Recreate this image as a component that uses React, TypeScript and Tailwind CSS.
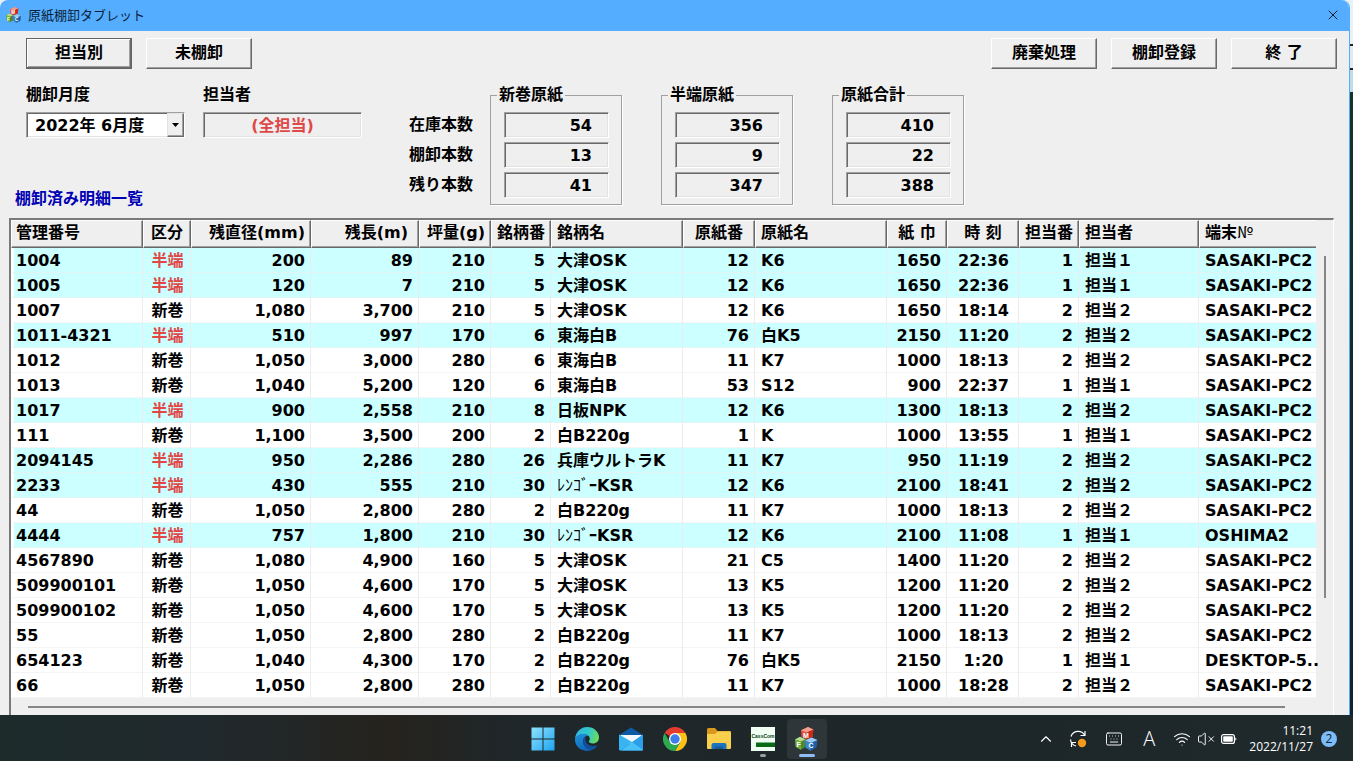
import { ChevronUp, Keyboard, Wifi, VolumeX, X } from "lucide-react"
import clsx from "clsx"

type Align = "left" | "center" | "right"

type Column = {
  title: string
  width: string
  head: Align
  body: Align
  headPad?: string
}

const columns: Column[] = [
  { title: "管理番号", width: "w-[132px]", head: "left", body: "left" },
  { title: "区分", width: "w-[48px]", head: "center", body: "center" },
  { title: "残直径(mm)", width: "w-[120px]", head: "right", body: "right" },
  { title: "残長(m)", width: "w-[108px]", head: "right", body: "right", headPad: "pr-2.5" },
  { title: "坪量(g)", width: "w-[72px]", head: "right", body: "right" },
  { title: "銘柄番", width: "w-[60px]", head: "center", body: "right" },
  { title: "銘柄名", width: "w-[132px]", head: "left", body: "left" },
  { title: "原紙番", width: "w-[72px]", head: "center", body: "right" },
  { title: "原紙名", width: "w-[132px]", head: "left", body: "left" },
  { title: "紙 巾", width: "w-[60px]", head: "center", body: "right" },
  { title: "時 刻", width: "w-[72px]", head: "center", body: "center" },
  { title: "担当番", width: "w-[60px]", head: "center", body: "right" },
  { title: "担当者", width: "w-[120px]", head: "left", body: "left" },
  { title: "端末№", width: "", head: "left", body: "left" },
]

const rows: string[][] = [
  ["1004", "半端", "200", "89", "210", "5", "大津OSK", "12", "K6", "1650", "22:36", "1", "担当１", "SASAKI-PC2"],
  ["1005", "半端", "120", "7", "210", "5", "大津OSK", "12", "K6", "1650", "22:36", "1", "担当１", "SASAKI-PC2"],
  ["1007", "新巻", "1,080", "3,700", "210", "5", "大津OSK", "12", "K6", "1650", "18:14", "2", "担当２", "SASAKI-PC2"],
  ["1011-4321", "半端", "510", "997", "170", "6", "東海白B", "76", "白K5", "2150", "11:20", "2", "担当２", "SASAKI-PC2"],
  ["1012", "新巻", "1,050", "3,000", "280", "6", "東海白B", "11", "K7", "1000", "18:13", "2", "担当２", "SASAKI-PC2"],
  ["1013", "新巻", "1,040", "5,200", "120", "6", "東海白B", "53", "S12", "900", "22:37", "1", "担当１", "SASAKI-PC2"],
  ["1017", "半端", "900", "2,558", "210", "8", "日板NPK", "12", "K6", "1300", "18:13", "2", "担当２", "SASAKI-PC2"],
  ["111", "新巻", "1,100", "3,500", "200", "2", "白B220g", "1", "K", "1000", "13:55", "1", "担当１", "SASAKI-PC2"],
  ["2094145", "半端", "950", "2,286", "280", "26", "兵庫ウルトラK", "11", "K7", "950", "11:19", "2", "担当２", "SASAKI-PC2"],
  ["2233", "半端", "430", "555", "210", "30", "ﾚﾝｺﾞｰKSR", "12", "K6", "2100", "18:41", "2", "担当２", "SASAKI-PC2"],
  ["44", "新巻", "1,050", "2,800", "280", "2", "白B220g", "11", "K7", "1000", "18:13", "2", "担当２", "SASAKI-PC2"],
  ["4444", "半端", "757", "1,800", "210", "30", "ﾚﾝｺﾞｰKSR", "12", "K6", "2100", "11:08", "1", "担当１", "OSHIMA2"],
  ["4567890", "新巻", "1,080", "4,900", "160", "5", "大津OSK", "21", "C5", "1400", "11:20", "2", "担当２", "SASAKI-PC2"],
  ["509900101", "新巻", "1,050", "4,600", "170", "5", "大津OSK", "13", "K5", "1200", "11:20", "2", "担当２", "SASAKI-PC2"],
  ["509900102", "新巻", "1,050", "4,600", "170", "5", "大津OSK", "13", "K5", "1200", "11:20", "2", "担当２", "SASAKI-PC2"],
  ["55", "新巻", "1,050", "2,800", "280", "2", "白B220g", "11", "K7", "1000", "18:13", "2", "担当２", "SASAKI-PC2"],
  ["654123", "新巻", "1,040", "4,300", "170", "2", "白B220g", "76", "白K5", "2150", "1:20", "1", "担当１", "DESKTOP-5.."],
  ["66", "新巻", "1,050", "2,800", "280", "2", "白B220g", "11", "K7", "1000", "18:28", "2", "担当２", "SASAKI-PC2"],
]

const totals = [
  { title: "新巻原紙", values: ["54", "13", "41"] },
  { title: "半端原紙", values: ["356", "9", "347"] },
  { title: "原紙合計", values: ["410", "22", "388"] },
]

const totalLabels = ["在庫本数", "棚卸本数", "残り本数"]

const alignClass: Record<Align, string> = {
  left: "text-left",
  center: "text-center",
  right: "text-right",
}

const sunken =
  "border border-t-[#a0a0a0] border-l-[#a0a0a0] border-r-white border-b-white shadow-[inset_1px_1px_0_#696969,inset_-1px_-1px_0_#e3e3e3]"

// The three lettered blocks used by the title bar and the task bar
function BlocksIcon({ className }: { className: string }) {
  return (
    <svg viewBox="0 0 24 24" className={className} aria-hidden="true">
      <path d="M6 3.2 13 0l5.4 2.4-.8 7.4-6 2.8-5.2-3z" fill="#e2513f" />
      <path d="M6 3.2 13 0l5.4 2.4-6.6 3z" fill="#f2a08c" />
      <path d="M18.400 2.400 11.800 5.400l-.2 7.200 6-2.800z" fill="#c9281c" />
      <path d="m0 12.4 5-2.6 5.6 2.4.2 7.6-4.8 3L.8 20z" fill="#4e8a2c" />
      <path d="m0 12.4 5-2.6 5.6 2.4-4.8 2.4z" fill="#b4dc90" />
      <path d="m0 12.4 5.8 2.2.2 8.2L.8 20z" fill="#6fae42" />
      <path d="m10 13.4 6.4-2.8 6 2.4-.8 7.6-6 3.2-5-3z" fill="#1d5ea6" />
      <path d="m10 13.4 6.4-2.8 6 2.4-6.6 3z" fill="#9fcbf0" />
      <path d="m10 13.4 5.8 2.6-.2 7.8-5-3z" fill="#3c86cc" />
      <g fill="#fff" fontFamily="Liberation Sans" fontWeight="bold" fontSize="7">
        <text x="8" y="11">M</text>
        <text x="1.4" y="20.4">F</text>
        <text x="13.4" y="21.4">C</text>
      </g>
    </svg>
  )
}

function WindowsIcon() {
  return (
    <svg viewBox="0 0 24 24" className="size-6" aria-hidden="true">
      <defs>
        <linearGradient id="win" x1="0" y1="0" x2="1" y2="1">
          <stop offset="0" stopColor="#8fe3ff" />
          <stop offset="1" stopColor="#1ea4ef" />
        </linearGradient>
      </defs>
      <path d="M.5.5h11v11H.5zM12.500.5h11v11h-11zM.5 12.500h11v11H.5zM12.500 12.500h11v11h-11z" fill="url(#win)" />
    </svg>
  )
}

function EdgeIcon() {
  return (
    <svg viewBox="0 0 24 24" className="size-6" aria-hidden="true">
      <defs>
        <linearGradient id="edgeTop" x1="0" y1="0.3" x2="1" y2="0.5">
          <stop offset="0" stopColor="#2fb4ea" />
          <stop offset="0.6" stopColor="#35c9c0" />
          <stop offset="1" stopColor="#6fdc5a" />
        </linearGradient>
        <linearGradient id="edgeLow" x1="0" y1="0" x2="0.6" y2="1">
          <stop offset="0" stopColor="#1d93dc" />
          <stop offset="1" stopColor="#1160b4" />
        </linearGradient>
      </defs>
      <path d="M0 12C.6 4.800 6 0 12.200 0 19 0 24 4.900 24 10.400c0 3.700-2.900 6-6.200 6-2.600 0-4-.9-4-1.800 0-.6 1-1.100 1-2.800 0-2.300-2.300-4.500-6-4.500C4.600 7.300 1.300 9 0 12z" fill="url(#edgeTop)" />
      <path d="M0 12c1-3 4.400-4.900 8.600-4.900 2 0 3.600.5 4.700 1.400-3 .3-5.300 2.700-5.300 5.700 0 3.600 3.200 6.500 7.800 6.500 2.600 0 4.800-.7 6.400-1.600C20 22.100 16.400 24 12.300 24 5.400 24-.4 19 0 12z" fill="url(#edgeLow)" />
      <path d="M8 14.200c0-2.200 1.400-4.300 3.300-5.200-.7 1-.9 2-.9 3 0 4 3.300 6.900 7.600 6.900 1.700 0 3.200-.4 4.500-1-.8 1.800-3.600 4.600-7.600 4.600-4 0-6.900-4-6.900-8.300z" fill="#0f4f9c" />
    </svg>
  )
}

function MailIcon() {
  return (
    <svg viewBox="0 0 24 24" className="size-6" aria-hidden="true">
      <path d="M0 8 12 .5 24 8v5H0z" fill="#0f5aa5" />
      <path d="M1.500 8h21v6L12 18 1.500 13z" fill="#f4f8fc" />
      <path d="M0 7.500 13 15 2 23.500h-.8A1.200 1.200 0 0 1 0 22.300z" fill="#37b4f2" />
      <path d="M24 7.500v14.800a1.200 1.200 0 0 1-1.200 1.200H2L13 15z" fill="#2b9fe8" />
      <path d="M13 15 24 23a1 1 0 0 1-1 .5H2z" fill="#48c0f8" />
    </svg>
  )
}

function ChromeIcon() {
  return (
    <svg viewBox="0 0 24 24" className="size-6" aria-hidden="true">
      <path d="M12 12 1.600 6A12 12 0 0 1 22.400 6z" fill="#e33b2e" />
      <path d="M12 12V6h10.400A12 12 0 0 1 12 24l5.200-9z" fill="#fbc116" />
      <path d="m12 12 5.200 3L12 24A12 12 0 0 1 1.600 6l5.200 9z" fill="#2da94f" />
      <circle cx="12" cy="12" r="6" fill="#fff" />
      <circle cx="12" cy="12" r="4.700" fill="#3f7ee8" />
    </svg>
  )
}

function FolderIcon() {
  return (
    <svg viewBox="0 0 24 24" className="size-6" aria-hidden="true">
      <path d="M0 2.500A1.500 1.500 0 0 1 1.500 1H8l2.500 3H23a1 1 0 0 1 1 1v5H0z" fill="#d9981b" />
      <path d="M0 7h8l2.500-2.500H23a1 1 0 0 1 1 1v15.500a1 1 0 0 1-1 1H1a1 1 0 0 1-1-1z" fill="#fbcf4e" />
      <path d="M4.500 22v-4a2 2 0 0 1 2-2h11a2 2 0 0 1 2 2v4z" fill="#1c74bf" />
      <path d="M8 19.500h8V22H8z" fill="#155a99" />
    </svg>
  )
}

function CassComIcon() {
  return (
    <svg viewBox="0 0 24 24" className="size-6" aria-hidden="true">
      <path d="M0 0h24v24H0z" fill="#effff2" />
      <text x="12" y="11" textAnchor="middle" fontFamily="Liberation Sans" fontWeight="bold" fontSize="5" fill="#0a3d12">
        CassCom
      </text>
      <path d="M5 15.500h19V20H5z" fill="#0b6a16" />
    </svg>
  )
}

function SyncIcon() {
  return (
    <svg viewBox="0 0 18 18" className="size-[18px]" fill="none" stroke="#fff" strokeWidth="1.200" aria-hidden="true">
      <path d="M2 6.500A7.500 7.500 0 0 1 15.500 5M16 1v4.500h-4.500" />
      <path d="M1.500 9.500A7.500 7.500 0 0 0 7 16M7 12.500H2.500V17" />
      <circle cx="13" cy="13" r="4.200" fill="#f59a1b" stroke="none" />
    </svg>
  )
}

function BatteryIcon() {
  return (
    <svg viewBox="0 0 16 12" className="h-3 w-4" aria-hidden="true">
      <rect x=".6" y="1.600" width="12.800" height="8.800" rx="2" fill="none" stroke="#fff" strokeWidth="1.200" />
      <rect x="2.200" y="3.200" width="9.600" height="5.600" rx=".8" fill="#fff" />
      <path d="M14.300 4.500c1.400 0 1.400 3 0 3z" fill="#fff" />
    </svg>
  )
}

function PushButton({ label, active = false }: { label: string; active?: boolean }) {
  return (
    <button
      type="button"
      className={clsx(
        "h-[31px] w-[106px] border bg-[#efefef] pb-0.5 text-base leading-6 font-bold",
        active
          ? "border-[#646464] shadow-[inset_-1px_-1px_0_#696969,inset_1px_1px_0_#fff,inset_-2px_-2px_0_#a0a0a0]"
          : "border-t-white border-r-[#696969] border-b-[#696969] border-l-white shadow-[inset_-1px_-1px_0_#a0a0a0]",
      )}
    >
      {label}
    </button>
  )
}

function TotalsBox({ title, values }: { title: string; values: string[] }) {
  return (
    <fieldset className="flex w-[132px] flex-col border border-[#a0a0a0] pr-3 pb-1.5 pl-[13px] shadow-[1px_1px_0_#fff]">
      <legend className="-ml-[7px] bg-[#efefef] px-0.5 leading-6">{title}</legend>
      <div className="flex flex-col gap-1 pt-[5px]">
        {values.map((value, i) => (
          <input
            key={totalLabels[i]}
            readOnly
            value={value}
            aria-label={`${title} ${totalLabels[i]}`}
            className={clsx("h-[26px] w-full pr-4 text-right", sunken)}
          />
        ))}
      </div>
    </fieldset>
  )
}

// Half-width kana come out in the light face, like the numero sign
function CellText({ text }: { text: string }) {
  const parts = text.split(/([\uff71-\uff9f]+|№)/)
  return (
    <>
      {parts.map((part, i) =>
        i % 2 ? (
          <span
            key={i}
            className={clsx("font-normal", part === "№" && "font-['Noto_Sans_CJK_JP',sans-serif] leading-4")}
          >
            {part}
          </span>
        ) : (
          part
        ),
      )}
    </>
  )
}

function StockTable() {
  return (
    <table className="w-full table-fixed border-separate border-spacing-0 bg-white text-base leading-6">
      <colgroup>
        {columns.map((c) => (
          <col key={c.title} className={c.width} />
        ))}
      </colgroup>
      <thead>
        <tr className="h-7">
          {columns.map((c, i) => (
            <th
              key={c.title}
              className={clsx(
                "overflow-hidden border-t border-b border-l border-t-white border-b-[#696969] border-l-white bg-[#efefef] p-0 pb-0.5 leading-6 font-bold whitespace-nowrap",
                i < columns.length - 1
                  ? "border-r border-r-[#696969] shadow-[inset_-1px_-1px_0_#a0a0a0]"
                  : "shadow-[inset_0_-1px_0_#a0a0a0]",
                alignClass[c.head],
                c.head === "left" && (i === 0 ? "pl-1" : "pl-[5px]"),
                c.head === "right" && (c.headPad ?? "pr-[5px]"),
              )}
            >
              <CellText text={c.title} />
            </th>
          ))}
        </tr>
      </thead>
      <tbody>
        {rows.map((row) => {
          const partial = row[1] === "半端"
          return (
            <tr key={row[0]} className={clsx("h-[25px]", partial && "bg-[#ccffff]")}>
              {row.map((text, i) => (
                <td
                  key={i}
                  className={clsx(
                    "border-b border-b-[#ececec]/60 p-0 pt-0.5 leading-[22px] whitespace-nowrap",
                    i < row.length - 1 && "border-r border-r-[#ececec]",
                    i === 0 && "border-l-[3px] border-l-white",
                    alignClass[columns[i].body],
                    columns[i].body === "left" && (i === 0 ? "pl-0.5" : "pl-1.5"),
                    columns[i].body === "right" && "pr-[5px]",
                    columns[i].body === "center" && "pl-0.5",
                    i === 1 && partial && "text-[#e04848]",
                  )}
                >
                  <CellText text={text} />
                </td>
              ))}
            </tr>
          )
        })}
      </tbody>
    </table>
  )
}

function Taskbar() {
  const apps = [
    { name: "スタート", icon: <WindowsIcon /> },
    { name: "Edge", icon: <EdgeIcon /> },
    { name: "メール", icon: <MailIcon /> },
    { name: "Chrome", icon: <ChromeIcon /> },
    { name: "エクスプローラー", icon: <FolderIcon /> },
    { name: "CassCom", icon: <CassComIcon />, mark: "w-1.5 bg-[#9a9fa2]" },
    { name: "原紙棚卸", icon: <BlocksIcon className="size-6" />, mark: "w-4 bg-[#8fbdf5]", active: true },
  ]

  return (
    <footer className="grid h-[46px] grid-cols-[1fr_auto_1fr] items-center bg-[linear-gradient(90deg,#1d2b2b_0%,#20292d_15%,#26231e_29%,#1f272a_38%,#1d2629_70%,#1f2a2d_100%)] pt-px font-normal text-white">
      <div />
      <nav className="flex gap-1 pr-1">
        {apps.map((app) => (
          <button
            key={app.name}
            type="button"
            aria-label={app.name}
            className={clsx(
              "relative flex size-10 items-center justify-center rounded",
              app.active && "bg-[#2e3639]",
            )}
          >
            {app.icon}
            {app.mark && <span className={clsx("absolute bottom-0.5 h-[3px] rounded-full", app.mark)} />}
          </button>
        ))}
      </nav>
      <div className="flex items-center justify-end pr-4">
        <ChevronUp size={18} strokeWidth={1.5} className="mr-3.5" />
        <span className="mr-[18px]">
          <SyncIcon />
        </span>
        <Keyboard size={18} strokeWidth={1.25} className="mr-5" />
        <span className="mr-[18px] font-['Open_Sans',sans-serif] text-xl leading-6 font-light">A</span>
        <Wifi size={18} strokeWidth={1.5} className="mr-1.5" />
        <VolumeX size={18} strokeWidth={1.25} className="mr-1.5" />
        <BatteryIcon />
        <div className="ml-3 text-right font-['Open_Sans',sans-serif] text-xs leading-4">
          <p>11:21</p>
          <p>2022/11/27</p>
        </div>
        <span className="ml-2 flex size-4 items-center justify-center rounded-full bg-[#7cbcf8] font-['Open_Sans',sans-serif] text-xs leading-4 text-[#10202c]">
          2
        </span>
      </div>
    </footer>
  )
}

export default function App() {
  return (
    <div className="flex min-h-screen flex-col bg-[#16302c] font-['DejaVu_Sans','Noto_Sans_CJK_JP',sans-serif] text-base font-bold text-black">
      <div className="flex flex-1 bg-[linear-gradient(180deg,#e9f1f6_0,#e9f1f6_44px,#222_44px,#222_46px,#e2e8f0_46px,#e2e8f0_68px,#222_68px,#222_70px,#c3dae8_70px,#c3dae8_92px,#15332d_92px,#123_100%)]">
        <main className="mr-[3px] flex min-w-0 flex-1 flex-col rounded-t-lg border-r border-[#54adff] bg-[#efefef]">
          <header className="flex h-[31px] items-center rounded-t-lg bg-[#54adff] pr-2 pb-0.5 pl-1.5">
            <BlocksIcon className="size-4" />
            <h1 className="ml-1.5 flex-1 font-['Noto_Sans_CJK_JP',sans-serif] text-[13px] leading-6 font-normal text-[#0c2238]">
              原紙棚卸タブレット
            </h1>
            <button type="button" aria-label="閉じる">
              <X size={16} strokeWidth={1.25} />
            </button>
          </header>

          <div className="flex justify-between pt-[7px] pr-3 pl-[26px]">
            <div className="flex gap-3.5">
              <PushButton label="担当別" active />
              <PushButton label="未棚卸" />
            </div>
            <div className="flex gap-3.5">
              <PushButton label="廃棄処理" />
              <PushButton label="棚卸登録" />
              <PushButton label="終 了" />
            </div>
          </div>

          <div className="mt-3.5 flex items-start pl-[15px]">
            <div className="w-[394px]">
              <div className="flex gap-[18px] pl-[11px]">
                <div className="flex w-[159px] flex-col gap-[5px]">
                  <label htmlFor="month" className="leading-6">
                    棚卸月度
                  </label>
                  <div className={clsx("relative h-[26px] bg-white p-px", sunken)}>
                    <select id="month" className="h-full w-full appearance-none bg-white pl-[7px]">
                      <option>2022年 6月度</option>
                    </select>
                    <span className="pointer-events-none absolute inset-y-0 right-0 flex w-[17px] items-center justify-center border border-t-[#e3e3e3] border-r-[#696969] border-b-[#696969] border-l-[#e3e3e3] bg-[#efefef] shadow-[inset_-1px_-1px_0_#a0a0a0]">
                      <svg viewBox="0 0 7 4" className="h-1 w-[7px]" aria-hidden="true">
                        <path d="M0 0h7L3.500 4z" />
                      </svg>
                    </span>
                  </div>
                </div>
                <div className="flex w-[159px] flex-col gap-[5px]">
                  <label htmlFor="staff" className="leading-6">
                    担当者
                  </label>
                  <input
                    id="staff"
                    readOnly
                    value="(全担当)"
                    className={clsx("h-[26px] w-full pb-0.5 text-center text-[#e04848]", sunken)}
                  />
                </div>
              </div>
              <h2 className="mt-[49px] leading-6 text-[#0000b4]">棚卸済み明細一覧</h2>
            </div>

            <div className="flex w-[81px] flex-col gap-1 pt-[29px]">
              {totalLabels.map((label) => (
                <p key={label} className="leading-[26px]">
                  {label}
                </p>
              ))}
            </div>

            <div className="flex gap-[39px]">
              {totals.map((t) => (
                <TotalsBox key={t.title} title={t.title} values={t.values} />
              ))}
            </div>
          </div>

          <section className="mt-[7px] mr-[15px] ml-[9px] flex flex-1 flex-col border-t-2 border-r border-l-2 border-t-[#7a7a7a] border-r-white border-l-[#7a7a7a]">
            <div className="flex">
              <div className="min-w-0 flex-1">
                <StockTable />
              </div>
              <div className="flex w-[17px] justify-center pt-9 pb-[100px]">
                <div className="w-0.5 bg-[#868686]" />
              </div>
            </div>
            <div className="flex h-[17px] items-center pr-12 pl-[17px]">
              <div className="h-0.5 flex-1 bg-[#868686]" />
            </div>
          </section>
        </main>
      </div>
      <Taskbar />
    </div>
  )
}
